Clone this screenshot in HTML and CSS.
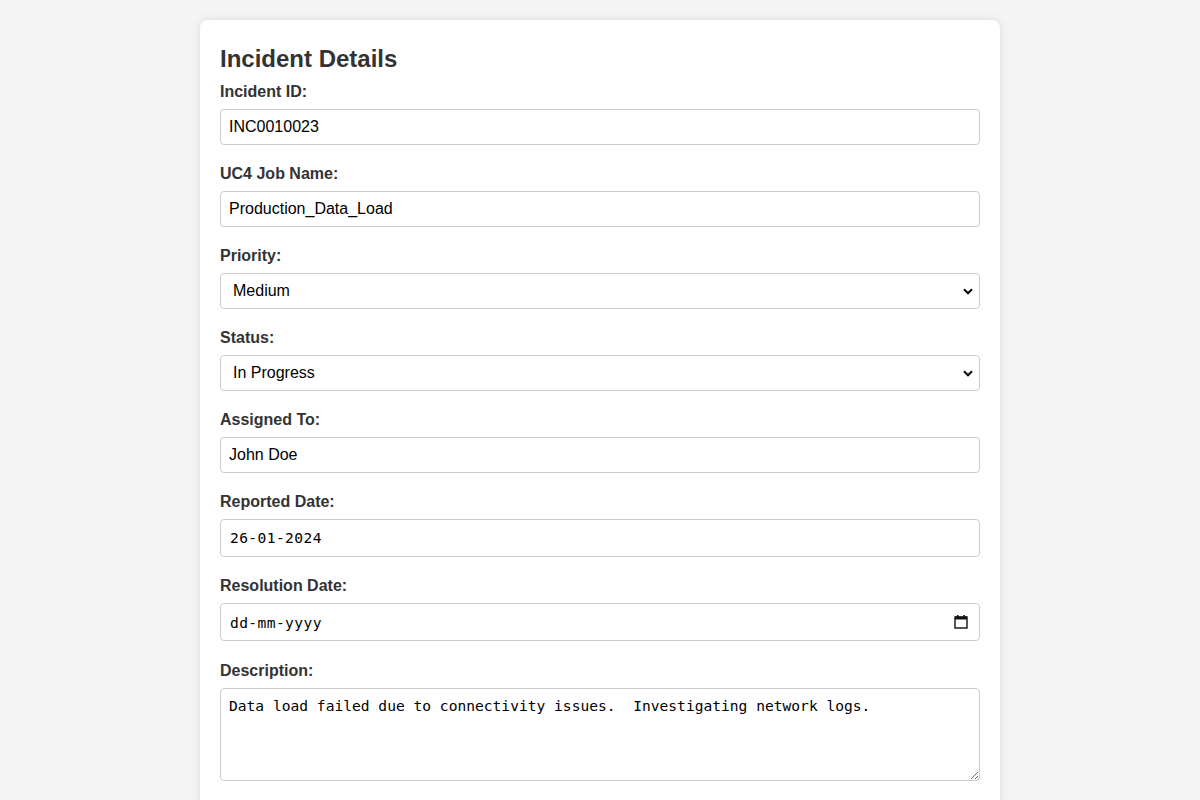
FILE: index.html
```html
<!DOCTYPE html>
<html lang="en">
<head>
<meta charset="utf-8">
<title>Incident Details</title>
<link rel="stylesheet" href="styles.css">
</head>
<body>
<div class="card">
  <h2 class="title">Incident Details</h2>
  <form class="form">
    <label class="label" for="iid">Incident ID:</label>
    <input class="field" id="iid" type="text" value="INC0010023">

    <label class="label" for="job">UC4 Job Name:</label>
    <input class="field" id="job" type="text" value="Production_Data_Load">

    <label class="label" for="prio">Priority:</label>
    <div class="select-wrap">
      <select class="field select" id="prio">
        <option>Low</option>
        <option selected>Medium</option>
        <option>High</option>
      </select>
      <svg class="chevron" width="10" height="7" viewBox="0 0 10 7"><path d="M1 1.2 L5 5.2 L9 1.2" fill="none" stroke="#111" stroke-width="2.2"/></svg>
    </div>

    <label class="label" for="status">Status:</label>
    <div class="select-wrap">
      <select class="field select" id="status">
        <option>Open</option>
        <option selected>In Progress</option>
        <option>Resolved</option>
      </select>
      <svg class="chevron" width="10" height="7" viewBox="0 0 10 7"><path d="M1 1.2 L5 5.2 L9 1.2" fill="none" stroke="#111" stroke-width="2.2"/></svg>
    </div>

    <label class="label" for="asg">Assigned To:</label>
    <input class="field" id="asg" type="text" value="John Doe">

    <label class="label" for="rep">Reported Date:</label>
    <input class="field date" id="rep" type="text" value="26-01-2024">

    <label class="label" for="res">Resolution Date:</label>
    <div class="select-wrap">
      <input class="field date" id="res" type="text" placeholder="dd-mm-yyyy">
      <svg class="calendar" width="14" height="15" viewBox="0 0 14 15"><rect x="1" y="3" width="12" height="11" fill="none" stroke="#111" stroke-width="1.4"/><rect x="1" y="2.5" width="12" height="3" fill="#111"/><rect x="3" y="1" width="1.6" height="2" fill="#111"/><rect x="9.4" y="1" width="1.6" height="2" fill="#111"/></svg>
    </div>

    <label class="label" for="desc">Description:</label>
    <textarea class="field area" id="desc" rows="4">Data load failed due to connectivity issues.  Investigating network logs.</textarea>
  </form>
</div>
</body>
</html>
```

FILE: styles.css
```css
html, body {
  margin: 0;
  padding: 0;
}
body {
  background: #f4f4f4;
  font-family: "Liberation Sans", Arial, sans-serif;
  color: #333;
  padding: 20px 0;
}
.card {
  width: 800px;
  box-sizing: border-box;
  margin: 0 auto;
  background: #fff;
  border-radius: 8px;
  box-shadow: 0 0 10px rgba(0, 0, 0, 0.1);
  padding: 25px 20px 20px;
}
.title {
  margin: 0 0 10px;
  font-size: 24px;
  font-weight: bold;
  color: #333;
  line-height: 27.6px;
}
.form {
  display: flex;
  flex-direction: column;
}
.label {
  display: block;
  font-weight: bold;
  font-size: 16px;
  line-height: 18px;
  color: #333;
  margin-bottom: 8px;
}
.field {
  display: block;
  width: 100%;
  box-sizing: border-box;
  height: 36px;
  padding: 8px;
  border: 1px solid #ccc;
  border-radius: 4px;
  font-family: "Liberation Sans", Arial, sans-serif;
  font-size: 16px;
  color: #000;
  background: #fff;
  margin: 0 0 20px;
  outline: none;
}
.select-wrap {
  position: relative;
}
.select {
  appearance: none;
  -webkit-appearance: none;
  padding-left: 12px;
  height: 36px;
}
.chevron {
  position: absolute;
  right: 7px;
  top: 15px;
}
.date {
  height: 38px;
  font-family: "DejaVu Sans Mono", monospace;
  font-size: 14.6px;
  letter-spacing: 0.4px;
  padding-left: 9px;
  margin-bottom: 20.5px;
}
.date::placeholder {
  color: #000;
  opacity: 1;
}
.calendar {
  position: absolute;
  right: 12px;
  top: 11px;
}
.area {
  height: 93px;
  font-family: "DejaVu Sans Mono", monospace;
  font-size: 14.6px;
  line-height: 18.75px;
  resize: vertical;
  padding: 8px;
  margin-bottom: 20px;
}
```
